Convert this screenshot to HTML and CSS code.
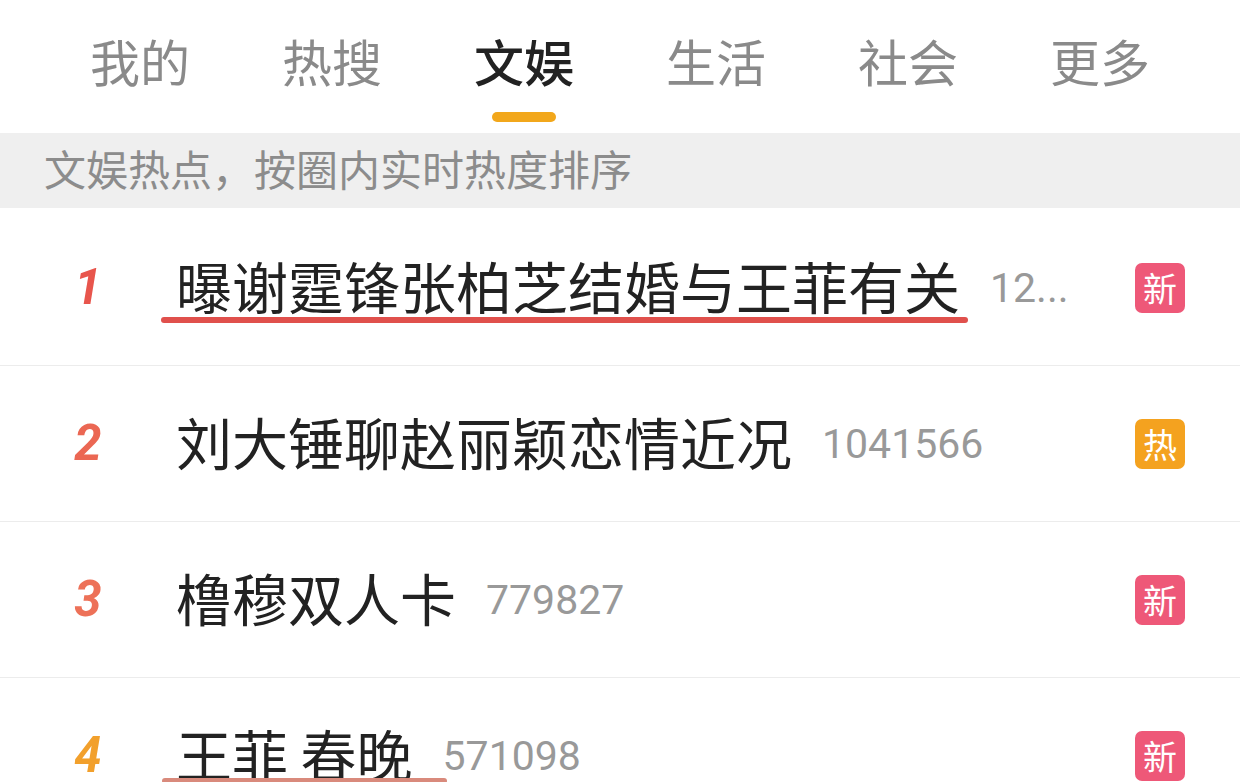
FILE: index.html
```html
<html>
  <head>
    <title>文娱热搜</title>
    <link rel="stylesheet" href="styles.css">
  </head>
  <body>
    <div class="tabs">
      <div class="tab"><span>我的</span></div>
      <div class="tab"><span>热搜</span></div>
      <div class="tab active"><span>文娱</span><i class="bar"></i></div>
      <div class="tab"><span>生活</span></div>
      <div class="tab"><span>社会</span></div>
      <div class="tab"><span>更多</span></div>
    </div>

    <div class="notice">文娱热点，按圈内实时热度排序</div>

    <ul class="list">
      <li class="row">
        <span class="rank r1">1</span>
        <span class="title mark">曝谢霆锋张柏芝结婚与王菲有关</span>
        <span class="count">12...</span>
        <span class="badge new">新</span>
      </li>
      <li class="row">
        <span class="rank r2">2</span>
        <span class="title">刘大锤聊赵丽颖恋情近况</span>
        <span class="count">1041566</span>
        <span class="badge hot">热</span>
      </li>
      <li class="row">
        <span class="rank r3">3</span>
        <span class="title">橹穆双人卡</span>
        <span class="count">779827</span>
        <span class="badge new">新</span>
      </li>
      <li class="row">
        <span class="rank r4">4</span>
        <span class="title mark faint">王菲 春晚</span>
        <span class="count">571098</span>
        <span class="badge new">新</span>
      </li>
    </ul>
  </body>
</html>
```

FILE: styles.css
```css
body {
  margin: 0;
  background: #fff;
  color: #222;
  font-family: "Noto Sans CJK SC", "Noto Sans", sans-serif;
  overflow: hidden;
}
.tabs {
  display: flex;
  padding: 0 44px;
  height: 133px;
}
.tab {
  flex: 1;
  display: flex;
  flex-direction: column;
  align-items: center;
  padding-top: 35px;
  font-size: 50px;
  line-height: 50px;
  color: #8a8a8a;
}
.tab.active {
  color: #222;
  font-weight: 500;
}
.tab .bar {
  display: block;
  width: 64px;
  height: 10px;
  margin-top: 27px;
  border-radius: 5px;
  background: #f2a71b;
}
.notice {
  height: 75px;
  line-height: 70px;
  padding-left: 44px;
  background: #efefef;
  color: #8c8c8c;
  font-size: 42px;
}
.list {
  margin: 0;
  padding: 0;
  list-style: none;
  padding-top: 2px;
}
.row {
  display: flex;
  align-items: center;
  height: 155px;
  border-bottom: 1px solid #ececec;
}
.rank {
  width: 176px;
  text-align: center;
  font-family: Roboto, "Liberation Sans", sans-serif;
  font-weight: 700;
  font-style: italic;
  font-size: 49px;
}
.r1 { color: #e8554c; }
.r2 { color: #eb6753; }
.r3 { color: #ed7158; }
.r4 { color: #f2a02c; }
.title {
  font-size: 56px;
  line-height: 56px;
  margin-top: -5px;
  color: #222;
}
.mark {
  position: relative;
}
.mark::after {
  content: "";
  position: absolute;
  left: -15px;
  right: -8px;
  bottom: -10px;
  height: 6px;
  border-radius: 3px;
  background: #e0504c;
}
.mark.faint::after {
  bottom: -3px;
  left: -14px;
  right: -34px;
  background: #d98a7c;
}
.count {
  margin-left: 30px;
  font-family: Roboto, "Noto Sans", sans-serif;
  font-size: 41px;
  color: #999;
}
.badge {
  margin-left: auto;
  margin-right: 55px;
  width: 50px;
  height: 50px;
  border-radius: 7px;
  color: #fff;
  font-size: 34px;
  line-height: 50px;
  text-align: center;
}
.new { background: #ee5878; }
.hot { background: #f4a21f; }
```
